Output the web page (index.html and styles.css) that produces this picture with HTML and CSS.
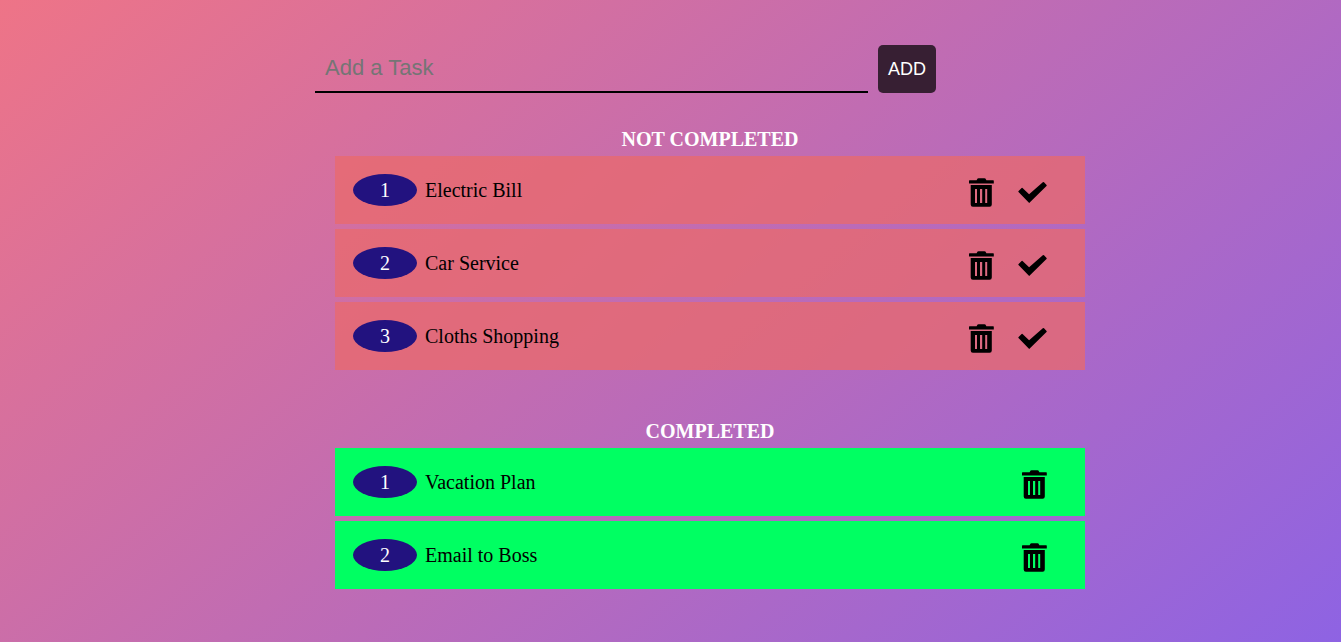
FILE: index.html
```html
<!DOCTYPE html>
<html lang="en">
<head>
<meta charset="utf-8">
<meta name="viewport" content="width=device-width, initial-scale=1">
<title>Tasks</title>
<link rel="stylesheet" href="styles.css">
</head>
<body>
<svg class="sprite" aria-hidden="true">
  <symbol id="bin" viewBox="0 0 26 29">
    <path fill-rule="evenodd" d="M1.600 2.200H8.600L9.600 0.600Q10 0.200 10.600 0.200H16.400Q17 0.200 17.400 0.600L18.400 2.200H25.200Q25.800 2.200 25.800 2.800V5.600H1V2.800Q1 2.200 1.600 2.200ZM2.700 7H23.800V26.500Q23.800 28.700 21.600 28.700H4.900Q2.700 28.700 2.700 26.500ZM7 11V25H9V11ZM12 11V25H14.200V11ZM17.200 11V25H19.200V11Z"/>
  </symbol>
  <symbol id="check" viewBox="0 0 29 21">
    <path d="M0.500 9.900Q0.100 9.400 0.600 8.900L3.600 6.100Q4.200 5.600 4.800 6.200L11.100 12.300 24.800 0.300Q25.400-0.200 26 0.300L28.600 2.900Q29 3.400 28.500 3.900L11.200 21Z"/>
  </symbol>
</svg>
<main class="container">
  <form class="task-form">
    <input class="task-input" type="text" placeholder="Add a Task" aria-label="Add a Task">
    <button class="add-button" type="button">ADD</button>
  </form>
  <section class="group">
    <h2 class="group-title">NOT COMPLETED</h2>
    <ul class="tasks">
      <li class="task"><span class="number">1</span><span class="name">Electric Bill</span><button class="action" type="button" aria-label="Delete"><svg class="bin"><use href="#bin"/></svg></button><button class="action" type="button" aria-label="Complete"><svg class="check"><use href="#check"/></svg></button></li>
      <li class="task"><span class="number">2</span><span class="name">Car Service</span><button class="action" type="button" aria-label="Delete"><svg class="bin"><use href="#bin"/></svg></button><button class="action" type="button" aria-label="Complete"><svg class="check"><use href="#check"/></svg></button></li>
      <li class="task"><span class="number">3</span><span class="name">Cloths Shopping</span><button class="action" type="button" aria-label="Delete"><svg class="bin"><use href="#bin"/></svg></button><button class="action" type="button" aria-label="Complete"><svg class="check"><use href="#check"/></svg></button></li>
    </ul>
  </section>
  <section class="group">
    <h2 class="group-title">COMPLETED</h2>
    <ul class="tasks">
      <li class="task done"><span class="number">1</span><span class="name">Vacation Plan</span><button class="action" type="button" aria-label="Delete"><svg class="bin"><use href="#bin"/></svg></button></li>
      <li class="task done"><span class="number">2</span><span class="name">Email to Boss</span><button class="action" type="button" aria-label="Delete"><svg class="bin"><use href="#bin"/></svg></button></li>
    </ul>
  </section>
</main>
</body>
</html>
```
FILE: styles.css
```css
* {
  box-sizing: border-box;
}

body {
  margin: 0;
  min-height: 100vh;
  background: linear-gradient(140deg, #ee7487, #8e63e3);
  font-family: "Liberation Serif", "Times New Roman", serif;
  font-size: 20px;
  color: #000;
}

.sprite {
  display: none;
}

.container {
  max-width: 751px;
  margin: 0 auto;
  padding-top: 45px;
}

.task-form {
  display: flex;
  gap: 10px;
  padding: 0 20px;
}

.task-input {
  flex: 0 1 553px;
  min-width: 0;
  height: 48px;
  padding: 0 10px 1px;
  border: 0;
  border-bottom: 2px solid #000;
  background: transparent;
  font: 22px "Liberation Sans", Arial, sans-serif;
  outline: none;
}

.task-input::placeholder {
  color: #757575;
}

.add-button {
  height: 48px;
  padding: 0 10px;
  border: 0;
  border-radius: 5px;
  background: #371f33;
  color: #fff;
  font: 18px "Liberation Sans", Arial, sans-serif;
}

.group {
  margin: 34px -39px 0 40px;
}

.group + .group {
  margin-top: 49px;
}

.group-title {
  margin: 0 0 5px;
  font-size: 20px;
  line-height: 24px;
  text-align: center;
  color: #fff;
}

.tasks {
  display: flex;
  flex-direction: column;
  gap: 5px;
  margin: 0;
  padding: 0;
  list-style: none;
}

.task {
  display: flex;
  align-items: center;
  height: 68px;
  padding: 0 38px 0 18px;
  background: rgba(233, 105, 107, 0.75);
}

.done {
  background: #00ff62;
}

.number {
  width: 64px;
  margin-right: 8px;
  border-radius: 50%;
  background: #22127f;
  color: #fff;
  line-height: 32px;
  text-align: center;
}

.name {
  flex: 1;
}

.action {
  display: flex;
  margin: 5px 0 0 24px;
  padding: 0;
  border: 0;
  background: none;
}

.bin {
  width: 26px;
  height: 29px;
}

.check {
  width: 29px;
  height: 21px;
}
```
